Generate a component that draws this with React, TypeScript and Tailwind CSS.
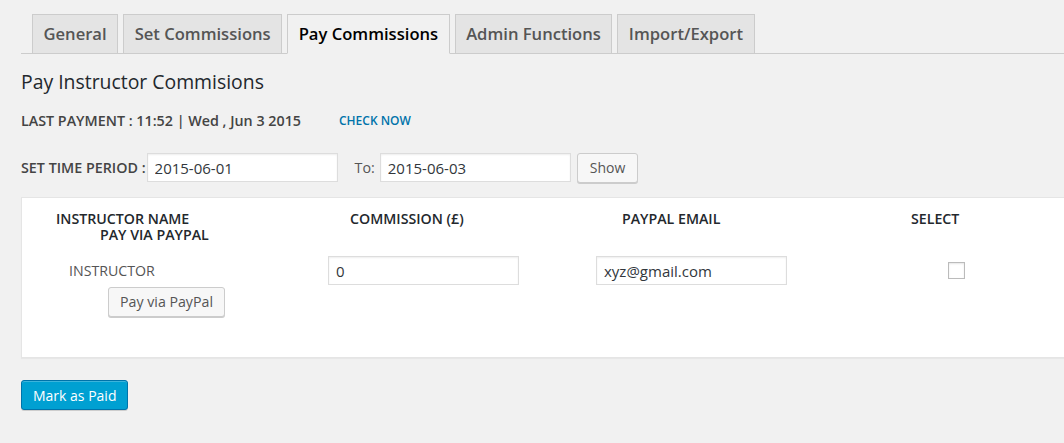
const tabs = ["General", "Set Commissions", "Pay Commissions", "Admin Functions", "Import/Export"];

function Input({ value, className = "" }: { value: string; className?: string }) {
  return (
    <input
      type="text"
      defaultValue={value}
      className={`h-[29px] w-[191px] border border-[#ddd] bg-white px-[7px] text-[15px] text-[#32373c] outline-none shadow-[inset_0_1px_2px_rgba(0,0,0,0.07)] ${className}`}
    />
  );
}

export default function App() {
  return (
    <div
      className="min-h-[443px] w-full overflow-hidden bg-[#f1f1f1] pt-[14px] text-[#444]"
      style={{ fontFamily: '"Open Sans", sans-serif' }}
    >
      {/* tabs */}
      <div className="ml-[21px] flex gap-[5px] border-b border-[#ccc] pl-[11px]">
        {tabs.map((t) => {
          const active = t === "Pay Commissions";
          return (
            <div
              key={t}
              className={`-mb-px flex h-[40px] items-center border border-[#ccc] px-[10.5px] text-[16.6px] font-semibold ${
                active ? "border-b-[#f1f1f1] bg-[#f1f1f1] text-black" : "bg-[#e4e4e4] text-[#555]"
              }`}
            >
              {t}
            </div>
          );
        })}
      </div>

      <div className="pl-[21px]">
        <h2 className="mt-[14px] text-[19.4px] leading-[28px] text-[#23282d]">Pay Instructor Commisions</h2>

        <div className="mt-[15px] flex h-[20px] items-center text-[14.3px] font-semibold text-[#444]">
          <span>LAST PAYMENT : 11:52 | Wed , Jun 3 2015</span>
          <span className="ml-[38px] text-[12px] text-[#0073aa]">CHECK NOW</span>
        </div>

        <div className="mt-[21px] flex h-[31px] items-center text-[14.3px]">
          <span className="font-semibold text-[#444]">SET TIME PERIOD :</span>
          <Input value="2015-06-01" className="ml-[1px]" />
          <span className="ml-[17px] text-[#555]">To:</span>
          <Input value="2015-06-03" className="ml-[5px]" />
          <button className="ml-[6px] h-[30px] rounded-[3px] border border-[#ccc] bg-[#f7f7f7] px-[12px] text-[14px] text-[#555] shadow-[0_1px_0_#ccc]">
            Show
          </button>
        </div>

        {/* panel */}
        <div className="mt-[14px] w-[1100px] border border-[#e5e5e5] bg-white pb-[40px] pt-[13px] shadow-[0_1px_1px_rgba(0,0,0,0.04)]">
          <div className="flex text-[14.2px] font-semibold leading-[16px] text-[#23282d]">
            <div className="w-[278px]">
              <div className="pl-[34px]">INSTRUCTOR NAME</div>
              <div className="pl-[78px]">PAY VIA PAYPAL</div>
            </div>
            <div className="w-[260px] pl-[50px]">COMMISSION (£)</div>
            <div className="w-[270px] pl-[62px]">PAYPAL EMAIL</div>
            <div className="pl-[81px]">SELECT</div>
          </div>

          <div className="mt-[13px] flex items-start">
            <div className="w-[278px]">
              <div className="pl-[47px] pt-[5px] text-[14.2px] leading-[20px] text-[#555]">INSTRUCTOR</div>
              <div className="pl-[86px] pt-[6px]">
                <button className="h-[30px] rounded-[3px] border border-[#ccc] bg-[#f7f7f7] px-[11px] text-[14.2px] text-[#555] shadow-[0_1px_0_#ccc]">
                  Pay via PayPal
                </button>
              </div>
            </div>
            <div className="w-[260px] pl-[28px]">
              <Input value="0" />
            </div>
            <div className="w-[270px] pl-[36px]">
              <Input value="xyz@gmail.com" />
            </div>
            <div className="pl-[118px] pt-[6px]">
              <div className="h-[17px] w-[17px] border border-[#bbb] bg-white shadow-[inset_0_1px_2px_rgba(0,0,0,0.1)]" />
            </div>
          </div>
        </div>

        <button className="mt-[22px] h-[30px] rounded-[3px] border border-[#0073aa] bg-[#00a0d2] px-[11px] text-[14px] text-white shadow-[inset_0_1px_0_rgba(120,200,230,0.5),0_1px_0_rgba(0,0,0,0.15)]">
          Mark as Paid
        </button>
      </div>
    </div>
  );
}
